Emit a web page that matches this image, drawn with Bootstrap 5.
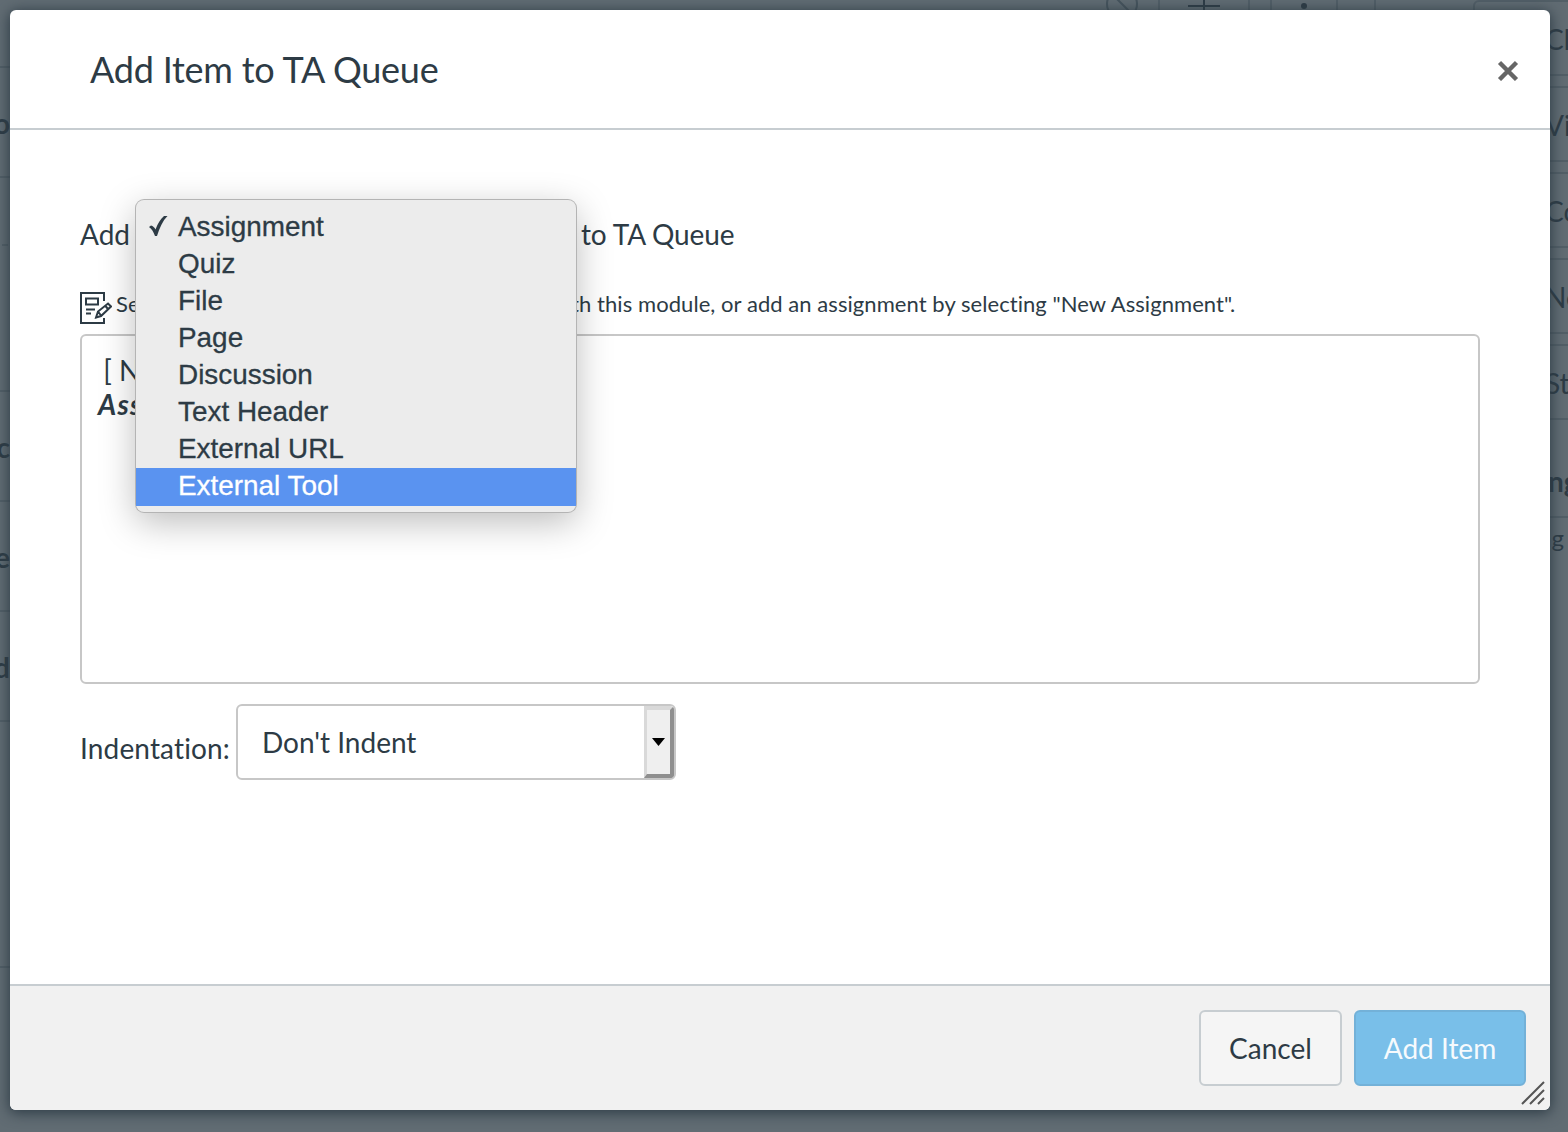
<!DOCTYPE html>
<html lang="en">
<head>
<meta charset="utf-8">
<meta name="viewport" content="width=device-width, initial-scale=1">
<title>Add Item to TA Queue</title>
<link href="https://cdn.jsdelivr.net/npm/bootstrap@5.3.0/dist/css/bootstrap.min.css" rel="stylesheet">
<style>
body{font-family:Lato,sans-serif;font-size:28px;line-height:36px;font-variant-ligatures:none;color:#2d3b45;background:#616c73;height:1132px;overflow:hidden}
svg{display:block}
.page-bg{height:1132px;overflow:hidden}
.bg-rule{border-color:#525f67!important}
.modules{width:10px;overflow:hidden;direction:rtl;font-weight:700}
.modules .mod-row{border-bottom:2px solid #525f67;overflow:hidden;white-space:nowrap;height:110px}
.modules .mod-row span{padding-top:2px}
.tools{width:281px;margin-left:1096px;height:20px}
.tools .cell{border-right:2px solid #525f67;height:20px;flex-shrink:0}
.course-side{width:95px;overflow:hidden;white-space:nowrap}
.side-btn{width:240px;height:76px;border:2px solid #525f67;border-radius:6px;margin-bottom:10px;padding:2px 0 0 70px;font-size:28px}
.dialog-win{left:10px;top:10px;width:1540px;height:1100px;border-radius:6px;background:#fff;box-shadow:0 2px 14px 1px #2d3b45}
.dialog-top{height:120px;border-bottom:2px solid #c7cdd1;padding:0 30px 0 80px}
.dialog-top h1{font-size:36px;line-height:44px;font-weight:400;letter-spacing:-.22px}
.dialog-main{padding:86px 70px 0}
.type-gap{width:447px}
.hint{font-size:22px;line-height:30px;margin-top:37px;height:36px}
.hint svg{margin-top:1px}
.hint span{letter-spacing:.06px}
.list-area{height:350px;border:2px solid #c7c7c7;border-radius:6px;margin-top:9px;padding:17px 16px}
.list-area div{line-height:34px;white-space:pre}
.indent-row{margin-top:20px}
.indent-row label{padding-top:12px;letter-spacing:.15px}
.indent-select{width:440px;height:76px;border:2px solid #c7c7c7;border-radius:6px;overflow:hidden;margin-left:6px}
.arrow-btn{width:30px;background:#efefef;border:4px solid;border-color:#d9d9d9 #8f8f8f #8f8f8f #d9d9d9;border-left-width:3px}
.dialog-bottom{height:126px;border-top:2px solid #c7cdd1;background:#f1f1f1;padding-right:24px;border-radius:0 0 6px 6px}
.act-btn{height:76px;font-size:28px;border-width:2px;border-radius:6px;padding:0;line-height:36px}
.act-cancel{width:143px;background:#f5f5f5;border-color:#c7cdd1;color:#2d3b45}
.act-add{width:172px;background:#79bfe9;border-color:#73b1d8;color:#f6fafd}
.type-menu{left:136px;top:200px;width:440px;height:312px;border-radius:8px;background:#ececec;box-shadow:0 0 0 1px #b4b4b4,0 10px 36px 0 rgba(0,0,0,.27);padding:9px 0 5px;font:27.900px/36px "Liberation Sans",sans-serif}
.type-menu li{height:37px;padding-left:42px;position:relative}
.type-menu li:last-child{height:38px;background:#5a93f0;color:#fff}
.type-menu li span{display:inline-block;-webkit-text-stroke:.3px}
.tick{left:12px;top:6px}
.grip{right:5px;bottom:5px}
</style>
<script src="https://cdn.jsdelivr.net/npm/bootstrap@5.3.0/dist/js/bootstrap.bundle.min.js"></script>
</head>
<body>
<div class="page-bg d-flex" aria-hidden="true">
  <div class="modules flex-shrink-0">
    <div class="mod-row" style="height:68px"></div>
    <div class="mod-row d-flex align-items-center" style="height:110px"><span>o</span></div>
    <div class="mod-row d-flex" style="height:214px;padding-top:66px"><i class="border-top border-2 bg-rule" style="width:6px;margin-right:2px"></i></div>
    <div class="mod-row d-flex align-items-center"><span>c</span></div>
    <div class="mod-row d-flex align-items-center"><span>e</span></div>
    <div class="mod-row d-flex align-items-center"><span>d</span></div>
    <div class="mod-row" style="height:246px"></div>
  </div>
  <div class="flex-grow-1">
    <div class="tools d-flex">
      <div class="cell" style="width:55px;margin-left:-1px"><svg class="ms-0" width="50" height="20" fill="none" stroke="#46545d" stroke-width="2"><circle cx="17" cy="4" r="15"/><path d="M6-7 28 15"/></svg></div>
      <div class="cell" style="width:90px"><svg width="80" height="20" fill="none" stroke="#2d3b45" stroke-width="2"><path d="M28 6h32M44 0v12"/></svg></div>
      <div class="cell" style="width:22px"></div>
      <div class="cell" style="width:66px"><svg width="60" height="20"><circle cx="32" cy="6" r="3" fill="#2d3b45"/></svg></div>
      <div class="cell" style="width:38px"></div>
    </div>
  </div>
  <div class="course-side flex-shrink-0">
    <div class="side-btn d-flex align-items-center">Choose</div>
    <div class="side-btn d-flex align-items-center">View</div>
    <div class="side-btn d-flex align-items-center">Course</div>
    <div class="side-btn d-flex align-items-center">New</div>
    <div class="side-btn d-flex align-items-center">Student</div>
    <div class="fw-bold border-bottom border-2 bg-rule" style="height:88px;padding:33px 0 0 10px">Coming Up</div>
    <div style="font-size:24px;padding:2px 0 0 6px">Nothing for</div>
  </div>
</div>

<div class="dialog-win position-absolute d-flex flex-column" role="dialog" aria-label="Add Item to TA Queue">
  <header class="dialog-top d-flex align-items-center justify-content-between">
    <h1 class="m-0">Add Item to TA Queue</h1>
    <svg width="24" height="24" viewBox="0 0 24 24" stroke="#666" stroke-width="4.400" stroke-linecap="butt" role="img" aria-label="Close"><path d="M3.500 5.500 20.500 22.500M20.500 5.500 3.500 22.500"/></svg>
  </header>
  <main class="dialog-main flex-grow-1">
    <div class="d-flex"><span style="width:54px">Add</span><span class="type-gap"></span><span style="letter-spacing:-.15px">to TA Queue</span></div>
    <div class="hint d-flex">
      <svg class="flex-shrink-0 me-1" width="32" height="34" fill="none" stroke="#2d3b45" stroke-width="2"><path d="M24 11V3H1v30h23v-5M6 8.500h12v6H6zM6 19.500h9M6 23.500h5M16 27.500l2-6 10-8 3 3-10 9.500zM25 15.500l3 3.500M18 21.500l3 4"/></svg>
      <span class="text-nowrap">Select the assignment you want to associate with this module, or add an assignment by selecting "New Assignment".</span>
    </div>
    <div class="list-area">
      <div style="margin-left:-2px"> [ New Assignment ]</div>
      <div class="fw-bold fst-italic" style="letter-spacing:1.2px">Assignments</div>
    </div>
    <div class="indent-row d-flex align-items-center">
      <label>Indentation:</label>
      <div class="indent-select d-flex justify-content-between">
        <span class="align-self-center" style="padding-left:24px">Don't Indent</span>
        <span class="arrow-btn d-flex align-items-center justify-content-center"><svg width="13" height="8"><path d="M0 0h13L6.500 8z"/></svg></span>
      </div>
    </div>
  </main>
  <footer class="dialog-bottom d-flex justify-content-end align-items-center gap-2">
    <button class="btn act-btn act-cancel" type="button">Cancel</button>
    <button class="btn act-btn act-add ms-1" type="button">Add Item</button>
  </footer>
  <svg class="grip position-absolute" width="24" height="24" stroke="#555" stroke-width="2"><path d="M1 23 23 1M9 23 23 9M17 23l6-6"/></svg>
</div>

<ul class="type-menu position-absolute list-unstyled m-0">
  <li><svg class="tick position-absolute" width="20" height="22" viewBox="0 0 20 22" fill="#2d3b45"><path d="M1 12 3 10.500c2 .5 3.500 2 4.500 4C10 8 12.500 4 16 1h3.500C14.500 6 11.500 13 9 21H7C5.500 17 4 14 1 12z"/></svg><span>Assignment</span></li>
  <li><span>Quiz</span></li>
  <li><span>File</span></li>
  <li><span>Page</span></li>
  <li><span>Discussion</span></li>
  <li><span>Text Header</span></li>
  <li><span>External URL</span></li>
  <li><span>External Tool</span></li>
</ul>
</body>
</html>
